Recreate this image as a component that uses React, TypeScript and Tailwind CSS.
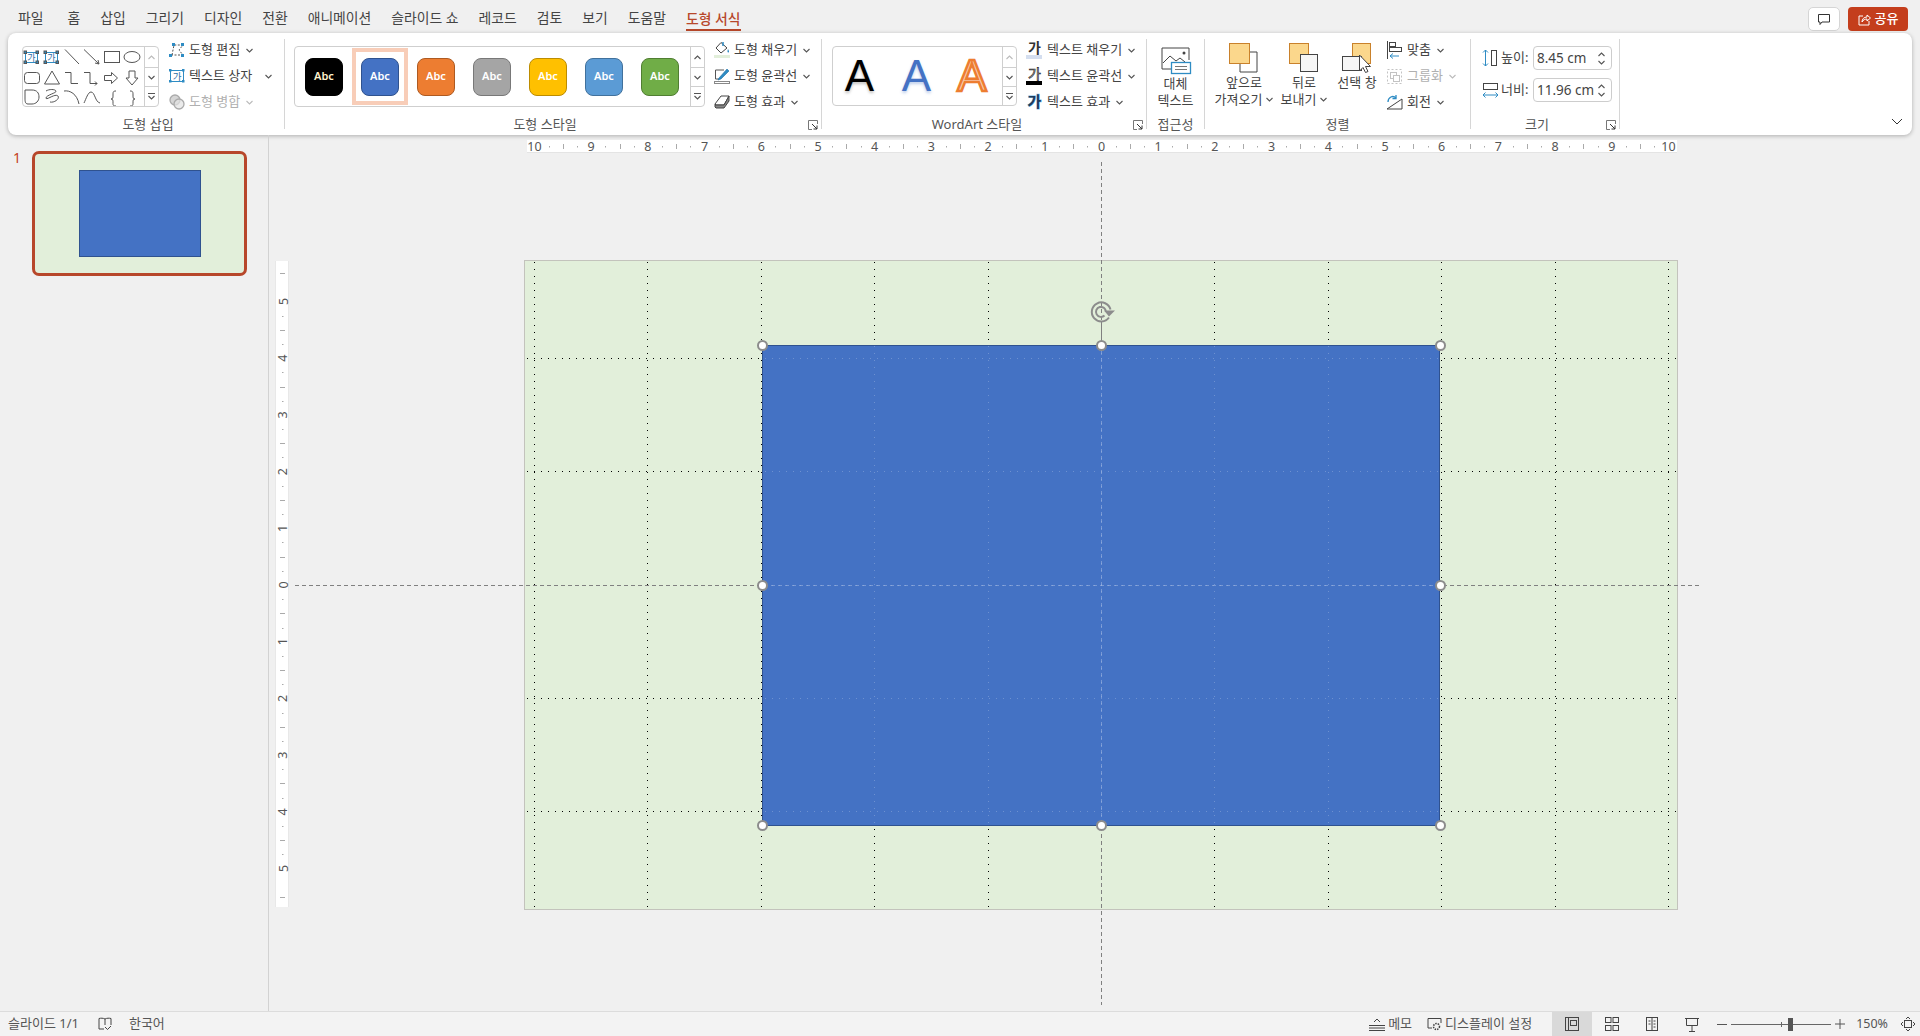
import React from "react";

const Chev = ({ c = "#555", up = false }: { c?: string; up?: boolean }) => (
  <svg width="7" height="5" viewBox="0 0 7 5" fill="none" className="shrink-0">
    <path d={up ? "M.5 4 3.5 1 6.5 4" : "M.5 1 3.5 4 6.5 1"} stroke={c} strokeWidth="1.1" />
  </svg>
);
const Launcher = () => (
  <svg width="10" height="10" viewBox="0 0 10 10" fill="none" className="absolute right-[3px] bottom-[-1px]">
    <path d="M9.5 4V.5H.5v9H4" stroke="#777" />
    <path d="M4 4 9 9M9 5.5V9H5.5" stroke="#333" />
  </svg>
);
const Corner = ({ x, y, c = "#2e8cc4" }: { x: number; y: number; c?: string }) => <rect x={x} y={y} width="2.5" height="2.5" fill={c} />;

const ShapesIcon = () => (
  <svg width="120" height="59" viewBox="24 47 120 59" fill="none" stroke="#555" strokeWidth="1" className="shrink-0 overflow-visible">
    <rect x="26.5" y="52.5" width="12" height="10" stroke="#2e8cc4" />
    <text x="32.5" y="61" fontSize="9" fill="#2e6da4" stroke="none" textAnchor="middle">가</text>
    <Corner x={25} y={51} /><Corner x={37} y={51} /><Corner x={25} y={61} /><Corner x={37} y={61} />
    <rect x="46.5" y="52.5" width="12" height="10" stroke="#2e8cc4" />
    <text x="52.5" y="61" fontSize="9" fill="#2e6da4" stroke="none" textAnchor="middle">가</text>
    <Corner x={45} y={51} /><Corner x={57} y={51} /><Corner x={45} y={61} /><Corner x={57} y={61} />
    <path d="M66 49.5 80 64M85 49.5 100 64M100 64l-4-1M100 64l-1-4" />
    <rect x="105.5" y="51.5" width="15" height="11" />
    <ellipse cx="133" cy="57" rx="8" ry="5.5" />
    <rect x="25.5" y="72.5" width="15" height="11" rx="3" />
    <path d="M53 71 45.5 84h15ZM66 72.5h6v11h7M85 72.5h6v11h7l-2-2M98 83.5l-2 2" />
    <path d="M105.5 75.5h7v-3l6 5.500-6 5.500v-3h-7Z" />
    <path d="M130 71h6v7h3l-6 7-6-7h3Z" />
    <g transform="translate(0 -3)">
      <path d="M26 93h7c5 0 7 3 7 7 0 4-3 7-7 7h-4c-3 0-3-3-3-6Z" />
      <path d="M47 94c3-2 9-2 10 0 1 2-10 4-10 7 0 3 9-5 12-2 2 3-4 7-8 6" />
      <path d="M65 94c6-1 13 3 15 13M85 106c2-4 4-11 7-11 4 0 4 10 9 11" />
      <path d="M117 94c-3 0-3 1-3 4 0 3 0 4-2 4 2 0 2 1 2 4 0 2 0 3 3 3M131 94c3 0 3 1 3 4 0 3 0 4 2 4-2 0-2 1-2 4 0 2 0 3-3 3" />
    </g>
  </svg>
);
const Scroll = ({ upOff = false }: { upOff?: boolean }) => (
  <div className="w-[14px] shrink-0 flex flex-col border-l border-[#cfcfcf]">
    <div className="h-[20px] flex items-center justify-center"><Chev up c={upOff ? "#bbb" : "#555"} /></div>
    <div className="h-[20px] flex items-center justify-center border-y border-[#cfcfcf]"><Chev /></div>
    <div className="flex-1 flex flex-col items-center justify-center gap-[1px]"><div className="w-[7px] h-[1px] bg-[#555]" /><Chev /></div>
  </div>
);
const Btn = ({ icon, label, chev = true, gray = false, gap = "gap-[4px]", cg = "ml-[2px]" }: { icon: React.ReactNode; label: string; chev?: boolean; gray?: boolean; gap?: string; cg?: string }) => (
  <div className={`flex items-center h-[22px] whitespace-nowrap ${gap} ${gray ? "text-[#b0b0b0]" : "text-[#444]"}`}>
    {icon}
    <span>{label}</span>
    {chev && <span className={cg}><Chev c={gray ? "#bbb" : "#555"} /></span>}
  </div>
);
const Group = ({ w, label, launcher, lp = "", children }: { w: string; label: string; launcher?: boolean; lp?: string; children: React.ReactNode }) => (
  <div className={`${w} shrink-0 h-[90px] mt-[6px] border-r border-[#d6d6d6] flex flex-col relative`}>
    <div className="h-[75px] flex items-start shrink-0">{children}</div>
    <div className={`h-[20px] leading-[20px] text-center text-[#555] shrink-0 text-[13px] ${lp}`}>{label}</div>
    {launcher && <Launcher />}
  </div>
);

const I = {
  edit: <svg width="16" height="16" viewBox="0 0 16 16" fill="none"><path d="M3 13 5 3h9l-4 5 4 5H3" stroke="#555" strokeDasharray="2 1.500" /><rect x="3" y="1" width="3" height="3" fill="#2e8cc4" /><rect x="12" y="1" width="3" height="3" fill="#2e8cc4" /><rect x="0" y="12" width="3" height="3" fill="#2e8cc4" /><rect x="12" y="12" width="3" height="3" fill="#2e8cc4" /></svg>,
  text: <svg width="16" height="16" viewBox="0 0 16 16" fill="none" className="overflow-visible"><rect x="1.500" y="2.500" width="13" height="11" stroke="#2e8cc4" /><text x="8" y="12" fontSize="9.500" fill="#2e6da4" textAnchor="middle">가</text><Corner x={0} y={1} /><Corner x={13} y={1} /><Corner x={0} y={12} /><Corner x={13} y={12} /></svg>,
  merge: <svg width="16" height="16" viewBox="0 0 16 16" fill="none" stroke="#aaa" strokeWidth="1.300"><circle cx="6" cy="6" r="5" fill="#d5d5d5" /><circle cx="10" cy="10" r="5" fill="#e3e3e3" fillOpacity=".7" /></svg>,
  fill: <svg width="16" height="18" viewBox="0 0 16 18" fill="none"><path d="M7 1.500 2 7l5 5 6-5Z" stroke="#444" fill="#fff" /><path d="M9 1v4" stroke="#2e8cc4" strokeWidth="1.500" /><path d="M14 8c1 2 1.500 3 .5 3.500s-1.500-1-.5-3.500" fill="#2e8cc4" /><rect x="0" y="14" width="16" height="3" fill="#e2efda" /></svg>,
  line: <svg width="16" height="18" viewBox="0 0 16 18" fill="none"><path d="M10 3H1.500v9H5" stroke="#555" /><path d="M5 11 13 2l2 2-8 8-3 1Z" fill="#2e8cc4" stroke="#1f6fa5" strokeWidth=".6" /><rect x=".5" y="14.500" width="15" height="2" stroke="#888" fill="#fff" /></svg>,
  effect: <svg width="16" height="16" viewBox="0 0 16 16" fill="none" stroke="#444"><path d="M1 10 7 2h8l-5 9H2Z" fill="#fff" /><path d="M1 10v3l1 1h8l5-7V2l-5 9H1" fill="#888" /></svg>,
  tfill: <svg width="17" height="20" viewBox="0 0 17 20" fill="none" className="overflow-visible"><text x="8.500" y="13" fontSize="14" fontWeight="700" fill="#333" textAnchor="middle">가</text><rect x="0" y="15" width="16" height="4" fill="#d4deef" /></svg>,
  tline: <svg width="17" height="20" viewBox="0 0 17 20" fill="none" className="overflow-visible"><text x="8.500" y="13" fontSize="14" fontWeight="400" fill="#fff" stroke="#222" strokeWidth=".7" textAnchor="middle">가</text><rect x="0" y="15" width="16" height="4" fill="#000" /></svg>,
  tfx: <svg width="17" height="20" viewBox="0 0 17 20" fill="none" className="overflow-visible"><text x="8.500" y="15" fontSize="15" fontWeight="700" fill="#2e8cc4" stroke="#7cc0ea" strokeWidth="1" textAnchor="middle">가</text><text x="8.500" y="15" fontSize="15" fontWeight="700" fill="#1f3b5c" textAnchor="middle">가</text></svg>,
  alt: <svg width="32" height="28" viewBox="0 0 32 28" fill="none"><path d="M12 22H2V1h27v12" stroke="#444" /><path d="M3 16l7-7 6 5 4-3 5 4" stroke="#444" /><circle cx="24" cy="6" r="1.500" fill="#444" /><rect x="11.500" y="15.500" width="19" height="11" fill="#fff" stroke="#2e8cc4" strokeWidth="1.300" /><path d="M15 19.500h12M15 22.500h12" stroke="#777" /></svg>,
  front: <svg width="30" height="30" viewBox="0 0 30 30" fill="none"><path d="M20 9h8v20H11v-8" stroke="#444" /><rect x=".5" y=".5" width="20" height="20" fill="#fbd78c" stroke="#c9812b" /></svg>,
  back: <svg width="30" height="30" viewBox="0 0 30 30" fill="none"><rect x=".5" y=".5" width="19" height="20" fill="#fbd78c" stroke="#c9812b" /><rect x="11.500" y="11.500" width="17" height="17" fill="#f6f6f6" stroke="#444" /></svg>,
  pane: <svg width="30" height="30" viewBox="0 0 30 30" fill="none"><rect x="10.500" y=".5" width="18" height="20" fill="#fbd78c" stroke="#c9812b" /><rect x=".5" y="13.500" width="19" height="14" fill="#f6f6f6" stroke="#444" /><path d="M17.500 12v16l3.500-3.500 2.500 5 2.500-1-2.500-5h5Z" fill="#fff" stroke="#444" /></svg>,
  align: <svg width="17" height="18" viewBox="0 0 17 18" fill="none"><path d="M1.500 0v18" stroke="#444" /><rect x="3.500" y="1.500" width="6" height="4" stroke="#444" /><rect x="3.500" y="6.500" width="12" height="4" stroke="#444" /><path d="M4 15h9M4 15l3-2.500M4 15l3 2.500" stroke="#2e8cc4" /></svg>,
  group: <svg width="17" height="17" viewBox="0 0 17 17" fill="none" stroke="#c3c3c3"><rect x="1.500" y="1.500" width="14" height="14" strokeDasharray="2 2" /><rect x="4.500" y="4.500" width="6" height="6" /><rect x="7.500" y="7.500" width="6" height="6" fill="#fff" /></svg>,
  rotate: <svg width="17" height="18" viewBox="0 0 17 18" fill="none"><path d="M1 16h15V6Z" stroke="#444" /><path d="M2 9c0-5 5-7 8-4" stroke="#2e8cc4" strokeWidth="1.300" /><path d="M10 2v3.500H6.500" stroke="#2e8cc4" strokeWidth="1.300" /></svg>,
  h: <svg width="16" height="18" viewBox="0 0 16 18" fill="none"><path d="M3.500 1v16M1 3.500 3.500 1 6 3.500M1 14.500 3.500 17 6 14.500" stroke="#2e8cc4" /><rect x="9.500" y="1.500" width="5" height="15" stroke="#444" /></svg>,
  w: <svg width="17" height="16" viewBox="0 0 17 16" fill="none"><rect x="1.500" y="1.500" width="14" height="6" stroke="#444" /><path d="M1 13h15M3.500 10.500 1 13l2.500 2.500M13.500 10.500 16 13l-2.500 2.500" stroke="#2e8cc4" /></svg>,
};

const swatches = [
  ["#000000", "#000000", "#fff2cc"],
  ["#4472c4", "#2f528f", "#fff"],
  ["#ed7d31", "#ae5a21", "#fff"],
  ["#a5a5a5", "#787878", "#fff"],
  ["#ffc000", "#bc8c00", "#fff"],
  ["#5b9bd5", "#41719c", "#fff"],
  ["#70ad47", "#507e32", "#fff"],
];
const tabs = ["파일", "홈", "삽입", "그리기", "디자인", "전환", "애니메이션", "슬라이드 쇼", "레코드", "검토", "보기", "도움말"];

const Spin = () => (
  <div className="flex flex-col gap-[3px] mr-[6px]"><Chev up /><Chev /></div>
);
const SizeInput = ({ v }: { v: string }) => (
  <div className="w-[79px] h-[24px] border border-[#cdcdcd] rounded-[4px] flex items-center justify-between pl-[3px] text-[13.500px] text-[#444] bg-white">
    <span className="whitespace-nowrap">{v}</span>
    <Spin />
  </div>
);

const TopRuler = () => {
  const c = 574.5, u = 56.7, items = [];
  for (let i = -10; i <= 10; i++) {
    const x = c + u * i;
    items.push(<text key={"n" + i} x={x} y="11" fontSize="12.500" fill="#555" textAnchor="middle">{Math.abs(i)}</text>);
    if (i < 10) {
      items.push(<rect key={"a" + i} x={Math.round(x + u * 0.25)} y="6" width="1" height="1.500" fill="#aaa" />);
      items.push(<rect key={"b" + i} x={Math.round(x + u * 0.5)} y="4" width="1" height="5" fill="#aaa" />);
      items.push(<rect key={"c" + i} x={Math.round(x + u * 0.75)} y="6" width="1" height="1.500" fill="#aaa" />);
    }
  }
  return <svg width="1150" height="13" className="block overflow-visible">{items}</svg>;
};
const LeftRuler = () => {
  const c = 324, u = 56.7, items = [];
  for (let i = -5; i <= 5; i++) {
    const y = c + u * i;
    items.push(<text key={"n" + i} x="7" y={y} fontSize="12.500" fill="#555" textAnchor="middle" dominantBaseline="central" transform={`rotate(-90 7 ${y})`}>{Math.abs(i)}</text>);
    if (i < 5) {
      items.push(<rect key={"a" + i} x="6" y={Math.round(y + u * 0.25)} width="1.500" height="1" fill="#aaa" />);
      items.push(<rect key={"b" + i} x="4" y={Math.round(y + u * 0.5)} width="5" height="1" fill="#aaa" />);
      items.push(<rect key={"c" + i} x="6" y={Math.round(y + u * 0.75)} width="1.500" height="1" fill="#aaa" />);
    }
  }
  items.push(<rect key="t1" x="4" y={Math.round(c - u * 5.5)} width="5" height="1" fill="#aaa" />);
  items.push(<rect key="t2" x="4" y={Math.round(c + u * 5.5)} width="5" height="1" fill="#aaa" />);
  return <svg width="14" height="646" className="block overflow-visible">{items}</svg>;
};

const gxs = [-5, -4, -3, -2, -1, 0, 1, 2, 3, 4, 5].map((k) => Math.floor(1101.5 + 113.4 * k) + 0.5 - 269);
const gys = [-2, -1, 0, 1, 2].map((k) => Math.floor(585 + 113.4 * k) + 0.5 - 135);
const Grid = ({ stroke, opacity }: { stroke: string; opacity: number }) => (
  <g stroke={stroke} strokeOpacity={opacity} strokeDasharray="1 6" strokeWidth="1">
    {gxs.map((x) => <line key={x} x1={x} x2={x} y1={127} y2={772} />)}
    {gys.map((y) => <line key={y} x1={258} x2={1407} y1={y} y2={y} />)}
  </g>
);

const handleXY = [
  [762, 345], [1101, 345], [1440, 345],
  [762, 585], [1440, 585],
  [762, 825], [1101, 825], [1440, 825],
];
const Handle = ({ x, y }: { x: number; y: number }) => (
  <div className="absolute w-[11px] h-[11px] rounded-full bg-white border-2 border-[#8c8c8c]" style={{ left: x - 269 - 5, top: y - 135 - 5 }} />
);

export default function App() {
  return (
    <div className="w-[1920px] h-[1036px] overflow-hidden bg-[#f0f0f0] flex flex-col text-[13px] text-[#444]" style={{ fontFamily: '"Noto Sans", "Noto Sans CJK KR", sans-serif' }}>
      {/* tabs */}
      <div className="h-[33px] shrink-0 flex items-start pl-[18px] pr-[12px]">
        <div className="flex gap-[20px] text-[13.850px] h-[33px] items-center pt-[4px] text-[#444]">
          {tabs.map((t, i) => <span key={t} className={`whitespace-nowrap ${i === 0 ? "mr-[4px]" : ""}`}>{t}</span>)}
          <span className="whitespace-nowrap text-[#b7472a] font-medium h-[27px] leading-[29px] border-b-2 border-[#b7472a] -mt-[2px]">도형 서식</span>
        </div>
        <div className="ml-auto flex gap-[8px] pt-[7px]">
          <div className="w-[32px] h-[24px] bg-white border border-[#d5d5d5] rounded-[5px] flex items-center justify-center">
            <svg width="14" height="14" viewBox="0 0 14 14" fill="none"><path d="M1.500 2.500h11v7.500H5L3 12.500V10H1.500Z" stroke="#333" /></svg>
          </div>
          <div className="w-[60px] h-[24px] bg-[#c43e1c] rounded-[4px] flex items-center justify-center gap-[4px] text-white font-medium text-[13px]">
            <svg width="13" height="13" viewBox="0 0 13 13" fill="none"><path d="M5 3H1v9h10V8" stroke="#fff" /><path d="M4 9c0-3 2-5 5-5V2l3.500 3L9 8V6c-2 0-4 1-5 3Z" stroke="#fff" /></svg>
            <span>공유</span>
          </div>
        </div>
      </div>

      {/* ribbon */}
      <div className="h-[102px] shrink-0 mx-2 bg-white rounded-[8px] shadow-[0_1px_4px_rgba(0,0,0,0.28)] flex">
        <Group w="w-[277px]" label="도형 삽입" lp="pl-[4px]">
          <div className="ml-[14px] mt-[7px] w-[137px] h-[61px] border border-[#cfcfcf] rounded-[4px] flex justify-between overflow-hidden">
            <ShapesIcon />
            <Scroll upOff />
          </div>
          <div className="ml-[10px] flex flex-col gap-[4px]">
            <Btn icon={I.edit} label="도형 편집" />
            <Btn icon={I.text} label="텍스트 상자" cg="ml-[9px]" />
            <Btn icon={I.merge} label="도형 병합" gray />
          </div>
        </Group>
        <Group w="w-[537px]" label="도형 스타일" launcher lp="pr-[16px]">
          <div className="ml-[9px] mt-[7px] w-[411px] h-[61px] border border-[#cfcfcf] rounded-[4px] flex justify-between">
            <div className="flex items-center pl-[1px]">
              {swatches.map(([bg, bd, fg], i) => (
                <div key={bg} className={`w-[56px] h-[57px] flex items-center justify-center ${i === 1 ? "border-[4px] border-[#f8cdb8]" : ""}`}>
                  <div className="w-[38px] h-[38px] rounded-[8px] border flex items-center justify-center text-[11px] font-semibold" style={{ background: bg, borderColor: bd, color: fg }}>Abc</div>
                </div>
              ))}
            </div>
            <Scroll />
          </div>
          <div className="ml-[9px] flex flex-col gap-[4px]">
            <Btn icon={I.fill} label="도형 채우기" />
            <Btn icon={I.line} label="도형 윤곽선" />
            <Btn icon={I.effect} label="도형 효과" />
          </div>
        </Group>
        <Group w="w-[325px]" label="WordArt 스타일" launcher lp="pr-[14px]">
          <div className="ml-[10px] mt-[7px] w-[185px] h-[60px] border border-[#cfcfcf] rounded-[4px] flex justify-between">
            <div className="flex items-center text-[44px] font-['Liberation_Sans'] leading-none">
              <div className="w-[56px] pr-[3px] text-center text-black [text-shadow:0_2px_3px_rgba(0,0,0,0.25)]">A</div>
              <div className="w-[55px] text-center text-[#4472c4] [text-shadow:0_2px_3px_rgba(68,114,196,0.35)]">A</div>
              <div className="w-[56px] text-center text-[#f8cbad] [-webkit-text-stroke:2.500px_#ed7d31]">A</div>
            </div>
            <Scroll upOff />
          </div>
          <div className="ml-[9px] flex flex-col gap-[4px]">
            <Btn icon={I.tfill} label="텍스트 채우기" />
            <Btn icon={I.tline} label="텍스트 윤곽선" />
            <Btn icon={I.tfx} label="텍스트 효과" />
          </div>
        </Group>
        <Group w="w-[58px]" label="접근성">
          <div className="w-full flex flex-col items-center pt-[8px] leading-[17px] text-center">
            {I.alt}
            <span>대체</span>
            <span>텍스트</span>
          </div>
        </Group>
        <Group w="w-[266px]" label="정렬">
          <div className="ml-[8px] w-[62px] flex flex-col items-center pt-[4px] leading-[17px] whitespace-nowrap">
            <div className="mb-[1px] h-[30px]">{I.front}</div>
            <span>앞으로</span>
            <span className="flex items-center gap-[4px]">가져오기<Chev /></span>
          </div>
          <div className="ml-[2px] w-[54px] flex flex-col items-center pt-[4px] leading-[17px] whitespace-nowrap">
            <div className="mb-[1px] h-[30px]">{I.back}</div>
            <span>뒤로</span>
            <span className="flex items-center gap-[4px]">보내기<Chev /></span>
          </div>
          <div className="ml-[2px] w-[48px] flex flex-col items-center pt-[4px] leading-[17px] whitespace-nowrap">
            <div className="mb-[1px] h-[30px]">{I.pane}</div>
            <span>선택 창</span>
          </div>
          <div className="ml-[5px] flex flex-col gap-[4px]">
            <Btn icon={I.align} label="맞춤" />
            <Btn icon={I.group} label="그룹화" gray />
            <Btn icon={I.rotate} label="회전" />
          </div>
        </Group>
        <Group w="w-[149px]" label="크기" launcher lp="pr-[16px]">
          <div className="ml-[11px] mt-[7px] flex flex-col gap-[8px]">
            <div className="flex items-center">
              <div className="w-[19px]">{I.h}</div>
              <span className="w-[32px] whitespace-nowrap">높이:</span>
              <SizeInput v="8.45 cm" />
            </div>
            <div className="flex items-center">
              <div className="w-[19px]">{I.w}</div>
              <span className="w-[32px] whitespace-nowrap">너비:</span>
              <SizeInput v="11.96 cm" />
            </div>
          </div>
        </Group>
        <div className="ml-auto self-end mb-[10px] mr-[9px]">
          <svg width="12" height="7" viewBox="0 0 12 7" fill="none"><path d="M1 1l5 5 5-5" stroke="#333" /></svg>
        </div>
      </div>

      {/* main */}
      <div className="flex-1 min-h-0 flex">
        <div className="w-[269px] shrink-0 border-r border-[#d2d2d2] flex items-start pt-[16px] pl-[13px]">
          <span className="w-[19px] text-[#c43e1c] text-[14px] leading-[14px]">1</span>
          <div className="w-[215px] h-[125px] rounded-[7px] border-[3px] border-[#b7472a] bg-[#e2efda] flex items-center justify-center">
            <div className="w-[122px] h-[87px] bg-[#4472c4] border border-[#2f528f]" />
          </div>
        </div>
        <div className="flex-1 relative overflow-hidden">
          <div className="ml-[258px] mt-[5px] w-[1150px] h-[13px] bg-white border-b border-[#e4e4e4]"><TopRuler /></div>
          <div className="flex mt-[107px] items-start">
            <div className="ml-[6px] mt-[1px] w-[14px] h-[646px] bg-white border-x border-[#e8e8e8]"><LeftRuler /></div>
            <div className="ml-[235px] w-[1154px] h-[650px] bg-[#e2efda] border border-[#c3c3bc]" />
          </div>
          <svg width="1651" height="877" className="absolute left-0 top-0" fill="none">
            <Grid stroke="#000" opacity={1} />
            <line x1="832.500" x2="832.500" y1="27" y2="870" stroke="#808080" strokeDasharray="4 3" />
            <line x1="26" x2="1431" y1="450.500" y2="450.500" stroke="#808080" strokeDasharray="4 3" />
            <line x1="832.500" x2="832.500" y1="186" y2="210" stroke="#808080" />
          </svg>
          <div className="absolute left-[493px] top-[210px] w-[678px] h-[481px] bg-[#4472c4] border-[1.5px] border-[#2f528f] overflow-hidden">
            <svg width="1651" height="877" className="absolute left-[-494px] top-[-211px]" fill="none">
              <Grid stroke="#fff" opacity={0.22} />
              <line x1="832.500" x2="832.500" y1="27" y2="870" stroke="#a9bde4" strokeOpacity=".5" strokeDasharray="4 3" />
              <line x1="26" x2="1431" y1="450.500" y2="450.500" stroke="#a9bde4" strokeOpacity=".5" strokeDasharray="4 3" />
            </svg>
          </div>
          {handleXY.map(([x, y]) => <Handle key={x + "-" + y} x={x} y={y} />)}
          <svg width="28" height="24" viewBox="0 0 28 24" fill="none" className="absolute left-[820px] top-[165px]">
            <path d="M21.500 9.500A9.500 9.500 0 1 0 20 17.500" stroke="#8c8c8c" strokeWidth="2" />
            <path d="M17 12A5 5 0 1 0 15.500 15.500" stroke="#8c8c8c" strokeWidth="2" />
            <path d="M15 10.500h11L20 16.500Z" fill="#8c8c8c" />
          </svg>
        </div>
      </div>

      {/* status */}
      <div className="h-[25px] shrink-0 bg-[#f3f3f3] border-t border-[#dcdcdc] flex items-center pl-[8px] text-[13px] text-[#555]">
        <span className="whitespace-nowrap">슬라이드 1/1</span>
        <svg width="14" height="14" viewBox="0 0 14 14" fill="none" className="ml-[19px]"><path d="M7 2C5 1 3 1 1 1.500V12h5M7 2c2-1 4-1 6-.500V8M7 2v6" stroke="#444" /><path d="M7 10l2.500 2.500L13 9" stroke="#444" /></svg>
        <span className="ml-[17px] whitespace-nowrap">한국어</span>
        <div className="ml-auto flex items-center h-full">
          <svg width="16" height="14" viewBox="0 0 16 14" fill="none"><path d="M0 8.500h16M0 11h16M0 13.500h16M5 5l3-3 3 3" stroke="#444" /></svg>
          <span className="ml-[3px] whitespace-nowrap">메모</span>
          <svg width="15" height="14" viewBox="0 0 15 14" fill="none" className="ml-[15px]"><path d="M5 11H1V1.500h13V6" stroke="#444" /><circle cx="9.500" cy="9.500" r="3" stroke="#444" strokeDasharray="1.500 1" strokeWidth="1.500" /></svg>
          <span className="ml-[3px] whitespace-nowrap">디스플레이 설정</span>
          <div className="ml-[20px] w-[40px] h-full bg-[#d9d9d9] flex items-center justify-center">
            <svg width="14" height="14" viewBox="0 0 14 14" fill="none" stroke="#444"><rect x=".5" y=".5" width="13" height="13" /><path d="M3.500.5v13" /><rect x="5.500" y="3.500" width="6" height="5" /></svg>
          </div>
          <div className="w-[40px] flex justify-center"><svg width="14" height="14" viewBox="0 0 14 14" fill="none" stroke="#444"><rect x=".5" y=".5" width="5.500" height="5" /><rect x="8" y=".5" width="5.500" height="5" /><rect x=".5" y="8.500" width="5.500" height="5" /><rect x="8" y="8.500" width="5.500" height="5" /></svg></div>
          <div className="w-[40px] flex justify-center"><svg width="14" height="14" viewBox="0 0 14 14" fill="none" stroke="#444"><rect x="1.500" y=".5" width="11" height="13" /><path d="M7 .5v13M3.500 4h2M3.500 7h2M8.500 4h2M8.500 7h2M8.500 10h2" /></svg></div>
          <div className="w-[40px] flex justify-center"><svg width="14" height="15" viewBox="0 0 14 15" fill="none" stroke="#444"><path d="M0 1.500h14M1.500 1.500v7h11v-7M7 8.500v6M4 14.500h6" /></svg></div>
          <span className="ml-[5px] w-[10px] h-[1px] bg-[#555]" />
          <div className="ml-[4px] w-[100px] h-[1px] bg-[#666] relative">
            <div className="absolute left-[50px] top-[-2px] w-[1px] h-[5px] bg-[#666]" />
            <div className="absolute left-[57px] top-[-6px] w-[5px] h-[13px] bg-[#555]" />
          </div>
          <svg width="10" height="10" viewBox="0 0 10 10" className="ml-[4px]"><path d="M0 5h10M5 0v10" stroke="#555" /></svg>
          <span className="ml-[11px] whitespace-nowrap text-[12.500px]">150%</span>
          <svg width="16" height="16" viewBox="0 0 16 16" fill="none" stroke="#444" className="ml-[12px] mr-[4px]"><rect x="4.500" y="4.500" width="7" height="7" /><path d="M6 3l2-2 2 2M6 13l2 2 2-2M3 6 1 8l2 2M13 6l2 2-2 2" /></svg>
        </div>
      </div>
    </div>
  );
}
